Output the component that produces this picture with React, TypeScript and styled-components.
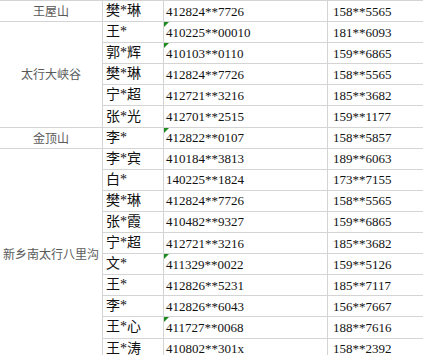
import React from "react";
import styled, { createGlobalStyle } from "styled-components";

const GlobalStyle = createGlobalStyle`
  html, body {
    margin: 0;
    padding: 0;
    background: #ffffff;
    overflow: hidden;
  }
`;

type Person = { name: string; id: string; phone: string; flag?: boolean };
type Group = { place: string; people: Person[] };

const groups: Group[] = [
  {
    place: "王屋山",
    people: [{ name: "樊*琳", id: "412824**7726", phone: "158**5565" }],
  },
  {
    place: "太行大峡谷",
    people: [
      { name: "王*", id: "410225**00010", phone: "181**6093", flag: true },
      { name: "郭*辉", id: "410103**0110", phone: "159**6865", flag: true },
      { name: "樊*琳", id: "412824**7726", phone: "158**5565" },
      { name: "宁*超", id: "412721**3216", phone: "185**3682" },
      { name: "张*光", id: "412701**2515", phone: "159**1177" },
    ],
  },
  {
    place: "金顶山",
    people: [{ name: "李*", id: "412822**0107", phone: "158**5857", flag: true }],
  },
  {
    place: "新乡南太行八里沟",
    people: [
      { name: "李*宾", id: "410184**3813", phone: "189**6063" },
      { name: "白*", id: "140225**1824", phone: "173**7155" },
      { name: "樊*琳", id: "412824**7726", phone: "158**5565" },
      { name: "张*霞", id: "410482**9327", phone: "159**6865" },
      { name: "宁*超", id: "412721**3216", phone: "185**3682" },
      { name: "文*", id: "411329**0022", phone: "159**5126", flag: true },
      { name: "王*", id: "412826**5231", phone: "185**7117" },
      { name: "李*", id: "412826**6043", phone: "156**7667" },
      { name: "王*心", id: "411727**0068", phone: "188**7616", flag: true },
      { name: "王*涛", id: "410802**301x", phone: "158**2392" },
    ],
  },
];

const Sheet = styled.div`
  display: grid;
  grid-template-columns: 102px 60px 163px 95px;
  grid-auto-rows: 20.1px;
  gap: 1px;
  background: #d4d4d4;
  border-top: 1px solid #d4d4d4;
  width: 423px;
`;

const Cell = styled.div`
  background: #ffffff;
  display: flex;
  align-items: center;
  overflow: hidden;
  white-space: nowrap;
  line-height: 1;
`;

const PlaceCell = styled(Cell)<{ $span: number }>`
  grid-row: span ${(p) => p.$span};
  justify-content: center;
  font-family: "Noto Sans CJK SC", sans-serif;
  font-size: 12px;
  color: #595959;
`;

const NameCell = styled(Cell)`
  padding-left: 3px;
  font-family: "Liberation Serif", "Noto Sans CJK SC", serif;
  font-size: 14px;
  color: #111111;
`;

const IdCell = styled(Cell)<{ $flag?: boolean }>`
  position: relative;
  padding-left: 2px;
  font-family: "Liberation Serif", serif;
  font-size: 13px;
  color: #111111;

  &::before {
    content: "";
    display: ${(p) => (p.$flag ? "block" : "none")};
    position: absolute;
    left: 0;
    top: 0;
    border-top: 5px solid #1f8a1f;
    border-right: 5px solid transparent;
  }
`;

const PhoneCell = styled(Cell)`
  padding-left: 5px;
  font-family: "Liberation Serif", serif;
  font-size: 13px;
  color: #111111;
`;

export default function App() {
  return (
    <>
      <GlobalStyle />
      <Sheet>
        {groups.map((g) =>
          g.people.map((p, i) => (
            <React.Fragment key={g.place + i}>
              {i === 0 && <PlaceCell $span={g.people.length}>{g.place}</PlaceCell>}
              <NameCell>{p.name}</NameCell>
              <IdCell $flag={p.flag}>{p.id}</IdCell>
              <PhoneCell>{p.phone}</PhoneCell>
            </React.Fragment>
          ))
        )}
      </Sheet>
    </>
  );
}
